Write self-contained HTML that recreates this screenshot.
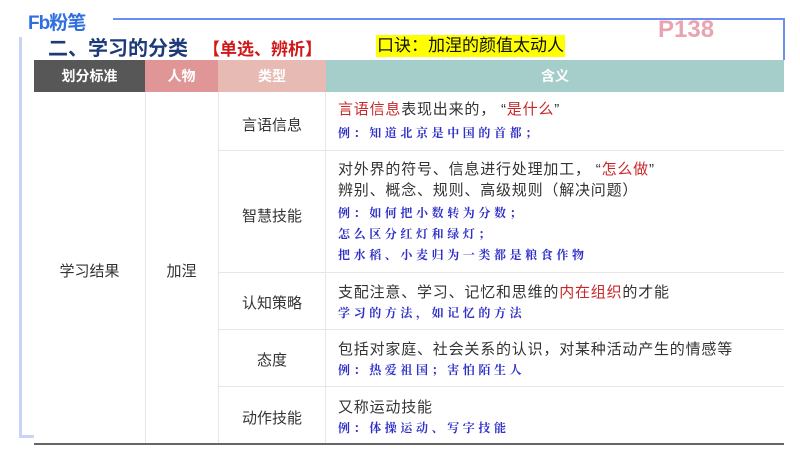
<!DOCTYPE html>
<html><head><meta charset="utf-8"><style>
body{margin:0;width:800px;height:450px;background:#fff;position:relative;overflow:hidden;font-family:"Liberation Sans","Noto Sans CJK SC",sans-serif;}
.a{position:absolute;white-space:nowrap}
.m{font-size:15px;color:#333;line-height:20px;letter-spacing:0.8px}
.e{font-family:"Liberation Serif","Noto Serif CJK SC",serif;font-size:12px;color:#2f2fc8;letter-spacing:3.6px;line-height:18px;font-weight:bold}
.r{color:#c8282a}
.c{position:absolute;font-size:15px;color:#333;text-align:center}
.hl{position:absolute;height:1px;background:#e6e6e6}
.vl{position:absolute;width:1px;background:#e6e6e6}
</style></head><body>
<div class="a" style="left:28px;top:8px;font-size:19px;font-weight:bold;color:#2f6fe0;letter-spacing:-1px">Fb粉笔</div>
<div class="a" style="left:113px;top:18px;width:672px;height:2px;background:#6b8ef0"></div>
<div class="a" style="left:783px;top:18px;width:2px;height:42px;background:#6b8ef0"></div>
<div class="a" style="left:19px;top:37px;width:3px;height:400px;background:#c9d3f5"></div>
<div class="a" style="left:19px;top:435px;width:15px;height:3px;background:#c9d3f5"></div>
<div class="a" style="left:658px;top:16px;font-size:24px;font-weight:bold;color:#eaa3b0">P138</div>
<div class="a" style="left:48px;top:32px;font-size:20px;font-weight:bold;color:#1e3a78">二、学习的分类</div>
<div class="a" style="left:203px;top:35px;font-size:17px;font-weight:bold;color:#d01818">【单选、辨析】</div>
<div class="a" style="left:376px;top:35px;font-size:17px;background:#ffff00;color:#111;line-height:22px;padding:0 1px">口诀：加涅的颜值太动人</div>
<div class="a" style="left:34px;top:60px;width:111px;height:32px;background:#575757;color:#fff;font-size:14px;font-weight:bold;text-align:center;line-height:32px">划分标准</div>
<div class="a" style="left:145px;top:60px;width:73px;height:32px;background:#e09696;color:#fff;font-size:14px;font-weight:bold;text-align:center;line-height:32px">人物</div>
<div class="a" style="left:218px;top:60px;width:108px;height:32px;background:#e8bab4;color:#fff;font-size:14px;font-weight:bold;text-align:center;line-height:32px">类型</div>
<div class="a" style="left:326px;top:60px;width:458px;height:32px;background:#a5cdca;color:#fff;font-size:14px;font-weight:bold;text-align:center;line-height:32px">含义</div>
<div class="vl" style="left:145px;top:92px;height:352px"></div>
<div class="vl" style="left:218px;top:92px;height:352px"></div>
<div class="vl" style="left:325px;top:92px;height:352px"></div>
<div class="hl" style="left:218px;top:150px;width:566px"></div>
<div class="hl" style="left:218px;top:272px;width:566px"></div>
<div class="hl" style="left:218px;top:329px;width:566px"></div>
<div class="hl" style="left:218px;top:386px;width:566px"></div>
<div class="a" style="left:34px;top:443px;width:750px;height:2px;background:#666"></div>
<div class="c" style="left:34px;top:260px;width:111px">学习结果</div>
<div class="c" style="left:145px;top:260px;width:73px">加涅</div>
<div class="c" style="left:218px;top:114px;width:108px">言语信息</div>
<div class="c" style="left:218px;top:205px;width:108px">智慧技能</div>
<div class="c" style="left:218px;top:292px;width:108px">认知策略</div>
<div class="c" style="left:218px;top:349px;width:108px">态度</div>
<div class="c" style="left:218px;top:407px;width:108px">动作技能</div>
<div class="a m" style="left:338px;top:100px"><span class="r">言语信息</span>表现出来的， “<span class="r">是什么</span>”</div>
<div class="a e" style="left:338px;top:124px">例：知道北京是中国的首都；</div>
<div class="a m" style="left:338px;top:160px">对外界的符号、信息进行处理加工， “<span class="r">怎么做</span>”</div>
<div class="a m" style="left:338px;top:181px">辨别、概念、规则、高级规则（解决问题）</div>
<div class="a e" style="left:338px;top:204px">例：如何把小数转为分数；</div>
<div class="a e" style="left:338px;top:225px">怎么区分红灯和绿灯；</div>
<div class="a e" style="left:338px;top:246px">把水稻、小麦归为一类都是粮食作物</div>
<div class="a m" style="left:338px;top:283px">支配注意、学习、记忆和思维的<span class="r">内在组织</span>的才能</div>
<div class="a e" style="left:338px;top:304px">学习的方法，如记忆的方法</div>
<div class="a m" style="left:338px;top:340px">包括对家庭、社会关系的认识，对某种活动产生的情感等</div>
<div class="a e" style="left:338px;top:361px">例：热爱祖国；害怕陌生人</div>
<div class="a m" style="left:338px;top:398px">又称运动技能</div>
<div class="a e" style="left:338px;top:419px">例：体操运动、写字技能</div>
</body></html>
